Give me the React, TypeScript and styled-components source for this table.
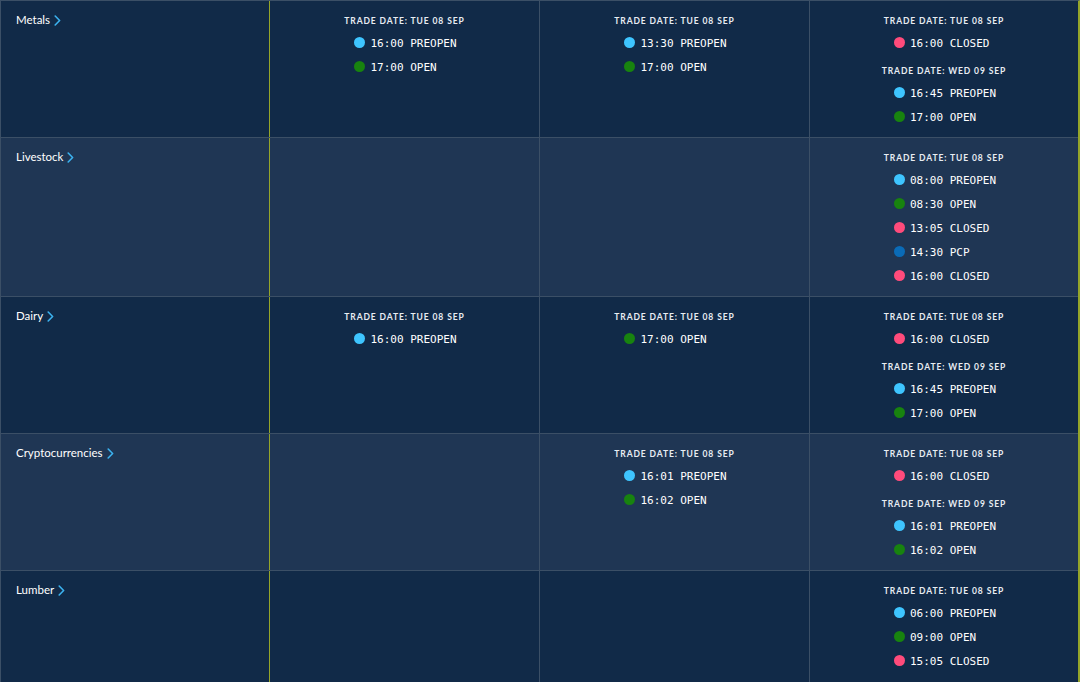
import React from "react";
import styled, { createGlobalStyle } from "styled-components";

const Global = createGlobalStyle`
  html, body { margin: 0; padding: 0; background: #112a48; }
  body { font-family: "Lato", "Noto Sans", sans-serif; }
`;

type Status = "PREOPEN" | "OPEN" | "CLOSED" | "PCP";
type Entry = { time: string; status: Status };
type Group = { date: string; entries: Entry[] };
type Row = { name: string; cells: Group[][] };

const dotColors: Record<Status, string> = {
  PREOPEN: "#3ec5ff",
  OPEN: "#18830f",
  CLOSED: "#ff4b7b",
  PCP: "#0a6bb7",
};

const TUE = "TRADE DATE: TUE 08 SEP";
const WED = "TRADE DATE: WED 09 SEP";

const rows: Row[] = [
  {
    name: "Metals",
    cells: [
      [{ date: TUE, entries: [{ time: "16:00", status: "PREOPEN" }, { time: "17:00", status: "OPEN" }] }],
      [{ date: TUE, entries: [{ time: "13:30", status: "PREOPEN" }, { time: "17:00", status: "OPEN" }] }],
      [
        { date: TUE, entries: [{ time: "16:00", status: "CLOSED" }] },
        { date: WED, entries: [{ time: "16:45", status: "PREOPEN" }, { time: "17:00", status: "OPEN" }] },
      ],
    ],
  },
  {
    name: "Livestock",
    cells: [
      [],
      [],
      [
        {
          date: TUE,
          entries: [
            { time: "08:00", status: "PREOPEN" },
            { time: "08:30", status: "OPEN" },
            { time: "13:05", status: "CLOSED" },
            { time: "14:30", status: "PCP" },
            { time: "16:00", status: "CLOSED" },
          ],
        },
      ],
    ],
  },
  {
    name: "Dairy",
    cells: [
      [{ date: TUE, entries: [{ time: "16:00", status: "PREOPEN" }] }],
      [{ date: TUE, entries: [{ time: "17:00", status: "OPEN" }] }],
      [
        { date: TUE, entries: [{ time: "16:00", status: "CLOSED" }] },
        { date: WED, entries: [{ time: "16:45", status: "PREOPEN" }, { time: "17:00", status: "OPEN" }] },
      ],
    ],
  },
  {
    name: "Cryptocurrencies",
    cells: [
      [],
      [{ date: TUE, entries: [{ time: "16:01", status: "PREOPEN" }, { time: "16:02", status: "OPEN" }] }],
      [
        { date: TUE, entries: [{ time: "16:00", status: "CLOSED" }] },
        { date: WED, entries: [{ time: "16:01", status: "PREOPEN" }, { time: "16:02", status: "OPEN" }] },
      ],
    ],
  },
  {
    name: "Lumber",
    cells: [
      [],
      [],
      [
        {
          date: TUE,
          entries: [
            { time: "06:00", status: "PREOPEN" },
            { time: "09:00", status: "OPEN" },
            { time: "15:05", status: "CLOSED" },
          ],
        },
      ],
    ],
  },
];

const Table = styled.div`
  width: 1080px;
  height: 682px;
  overflow: hidden;
  box-sizing: border-box;
  border-left: 1px solid #3b4f66;
  border-top: 1px solid #3b4f66;
  border-right: 2px solid #95a52a;
  display: flex;
  flex-direction: column;
`;

const RowBox = styled.div<{ $alt: boolean }>`
  display: grid;
  grid-template-columns: 269px 270px 270px 268px;
  min-height: 136px;
  background: ${(p) => (p.$alt ? "#1f3654" : "#112a48")};
  border-bottom: 1px solid #3b4f66;
  flex-shrink: 0;
`;

const LabelCell = styled.div`
  padding: 12px 15px;
  box-sizing: border-box;
  border-right: 1px solid #95a52a;
  display: flex;
  align-items: flex-start;
`;

const Label = styled.div`
  display: flex;
  align-items: center;
  gap: 4px;
  color: #ffffff;
  font-family: "Lato", "Noto Sans", sans-serif;
  font-size: 11.5px;
  font-weight: 400;
  line-height: 14px;
`;

const Cell = styled.div<{ $last?: boolean }>`
  padding: 14px 0 8px;
  box-sizing: border-box;
  border-right: ${(p) => (p.$last ? "none" : "1px solid #3b4f66")};
  display: flex;
  flex-direction: column;
  align-items: center;
  gap: 10px;
`;

const GroupBox = styled.div`
  display: flex;
  flex-direction: column;
  align-items: center;
  gap: 4px;
`;

const DateHead = styled.div`
  color: #e8edf3;
  font-family: "Lato", "Noto Sans", sans-serif;
  font-size: 8.5px;
  font-weight: 700;
  letter-spacing: 0.9px;
  line-height: 12px;
  white-space: nowrap;
`;

const EntryList = styled.div`
  width: 100px;
  display: flex;
  flex-direction: column;
`;

const EntryRow = styled.div`
  height: 24px;
  display: flex;
  align-items: center;
  gap: 5px;
  color: #ffffff;
  font-family: "DejaVu Sans Mono", "Liberation Mono", monospace;
  font-size: 11px;
  white-space: pre;
`;

const Dot = styled.span<{ $color: string }>`
  width: 11px;
  height: 11px;
  border-radius: 50%;
  background: ${(p) => p.$color};
  flex-shrink: 0;
  margin-top: -2px;
`;

const Chevron = () => (
  <svg width="7" height="11" viewBox="0 0 7 11" fill="none">
    <path d="M1.2 1 L5.6 5.5 L1.2 10" stroke="#3bb2ef" strokeWidth="1.6" strokeLinecap="round" strokeLinejoin="round" />
  </svg>
);

export default function App() {
  return (
    <>
      <Global />
      <Table>
        {rows.map((row, i) => (
          <RowBox key={row.name} $alt={i % 2 === 1}>
            <LabelCell>
              <Label>
                {row.name}
                <Chevron />
              </Label>
            </LabelCell>
            {row.cells.map((groups, ci) => (
              <Cell key={ci} $last={ci === row.cells.length - 1}>
                {groups.map((g, gi) => (
                  <GroupBox key={gi}>
                    <DateHead>{g.date}</DateHead>
                    <EntryList>
                      {g.entries.map((e, ei) => (
                        <EntryRow key={ei}>
                          <Dot $color={dotColors[e.status]} />
                          {`${e.time} ${e.status}`}
                        </EntryRow>
                      ))}
                    </EntryList>
                  </GroupBox>
                ))}
              </Cell>
            ))}
          </RowBox>
        ))}
      </Table>
    </>
  );
}
